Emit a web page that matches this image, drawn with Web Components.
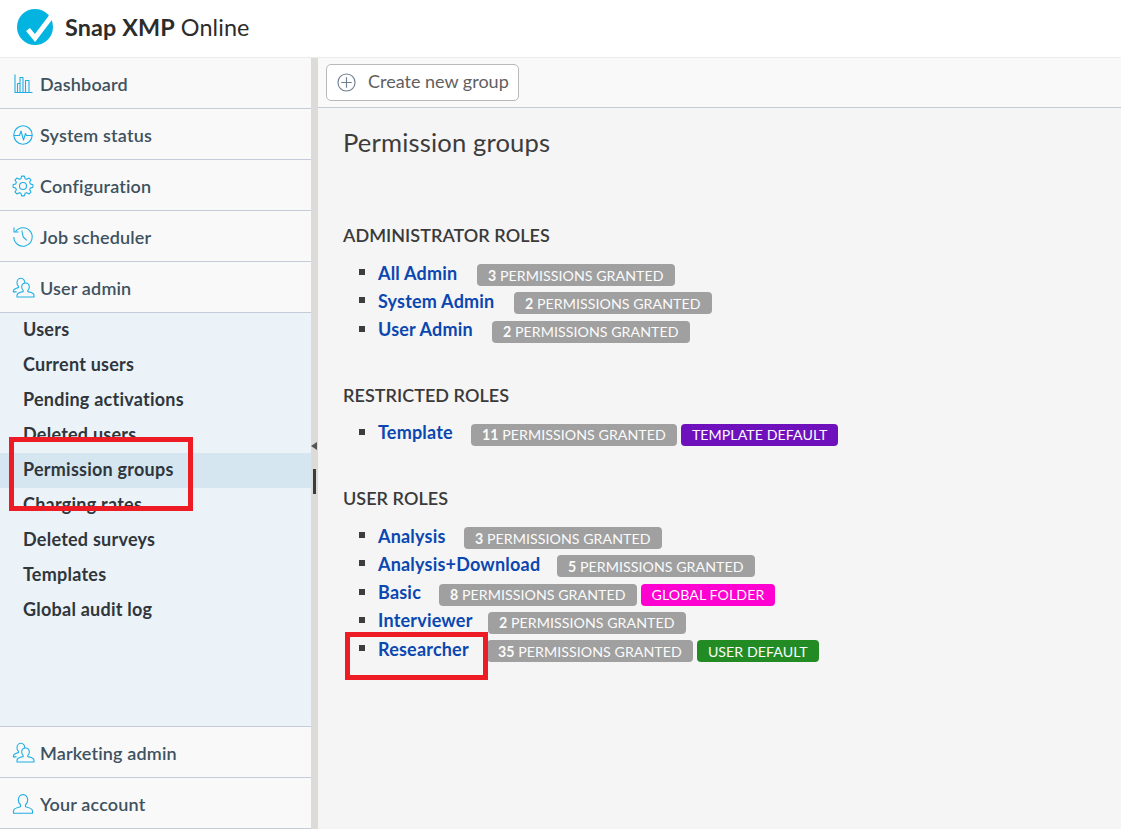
<!DOCTYPE html>
<html lang="en"><head><meta charset="utf-8"><title>Permission groups</title>
<style>
html,body{margin:0;height:100%}
body{font-family:Lato,"Open Sans",sans-serif;overflow:hidden}
</style></head>
<body>
<x-app>
  <x-top slot="top"></x-top>
  <x-side slot="side">
    <x-nav icon="chart">Dashboard</x-nav>
    <x-nav icon="pulse">System status</x-nav>
    <x-nav icon="gear">Configuration</x-nav>
    <x-nav icon="history">Job scheduler</x-nav>
    <x-nav icon="users">User admin</x-nav>
    <x-subnav>
      <x-subitem>Users</x-subitem>
      <x-subitem>Current users</x-subitem>
      <x-subitem>Pending activations</x-subitem>
      <x-subitem>Deleted users</x-subitem>
      <x-subitem active>Permission groups</x-subitem>
      <x-subitem>Charging rates</x-subitem>
      <x-subitem>Deleted surveys</x-subitem>
      <x-subitem>Templates</x-subitem>
      <x-subitem>Global audit log</x-subitem>
    </x-subnav>
    <x-nav icon="users">Marketing admin</x-nav>
    <x-nav icon="user">Your account</x-nav>
  </x-side>
  <x-splitter slot="split"></x-splitter>
  <x-toolbar slot="toolbar"><x-button>Create new group</x-button></x-toolbar>
  <x-content slot="content">
    <x-title>Permission groups</x-title>
    <x-section heading="ADMINISTRATOR ROLES" top="67">
      <x-role name="All Admin" w="99"><x-badge><b>3</b> PERMISSIONS GRANTED</x-badge></x-role>
      <x-role name="System Admin" w="136"><x-badge><b>2</b> PERMISSIONS GRANTED</x-badge></x-role>
      <x-role name="User Admin" w="114"><x-badge><b>2</b> PERMISSIONS GRANTED</x-badge></x-role>
    </x-section>
    <x-section heading="RESTRICTED ROLES" top="38">
      <x-role name="Template" w="93"><x-badge><b>11</b> PERMISSIONS GRANTED</x-badge><x-badge color="#6f10bd">TEMPLATE DEFAULT</x-badge></x-role>
    </x-section>
    <x-section heading="USER ROLES" top="38">
      <x-role name="Analysis" w="86"><x-badge><b>3</b> PERMISSIONS GRANTED</x-badge></x-role>
      <x-role name="Analysis+Download" w="179"><x-badge><b>5</b> PERMISSIONS GRANTED</x-badge></x-role>
      <x-role name="Basic" w="61"><x-badge><b>8</b> PERMISSIONS GRANTED</x-badge><x-badge color="#ff00d0">GLOBAL FOLDER</x-badge></x-role>
      <x-role name="Interviewer" w="110"><x-badge><b>2</b> PERMISSIONS GRANTED</x-badge></x-role>
      <x-role name="Researcher" w="109"><x-badge><b>35</b> PERMISSIONS GRANTED</x-badge><x-badge color="#238b23">USER DEFAULT</x-badge></x-role>
    </x-section>
  </x-content>
  <x-callout slot="over" style="left:9px;top:437px;width:184px;height:74px"></x-callout>
  <x-callout slot="over" style="left:345px;top:632px;width:143px;height:48px"></x-callout>
</x-app>
<script>
function gearPath(){
  let d='';const cx=10,cy=10,R=10,r=7.6,n=8;
  for(let i=0;i<n;i++){
    const a=i*2*Math.PI/n-Math.PI/2,s=2*Math.PI/n;
    const pts=[[r,a-s*.36],[R,a-s*.17],[R,a+s*.17],[r,a+s*.36]];
    for(const[p,t]of pts){d+=(d?'L':'M')+(cx+p*Math.cos(t)).toFixed(2)+' '+(cy+p*Math.sin(t)).toFixed(2);}
  }
  return '<circle cx="10" cy="10" r="3.500"/><path d="'+d+'z"/>';
}
const ICONS={
chart:'<path d="M2 0.500V18.500H19.500M4.500 18.500V9.500h2.500V18.500M7 9.500V3.500h3V18.500M12.500 18.500V6.500h3.500V18.500"/>',
pulse:'<circle cx="10" cy="10" r="9.200"/><path d="M.8 10.500H6.500L8 6l2.500 9 2-6.500 1 2h5.700"/>',
gear:gearPath(),
history:'<path d="M2.400 4.800A9.200 9.200 0 1 1 .8 10"/><path d="M1 .6v4.400h4.500"/><path d="M8.800 3.500l1.400 6.500 3.600 3.300"/>',
users:'<path d="M12.500 5c-2.300 0-3.800 1.800-3.800 4 0 1.500.6 2.700 1.500 3.400v1.200c-3 .6-6.200 1.700-6.200 3.600v1.800h17v-1.800c0-1.900-3.200-3-6.200-3.600v-1.200c.9-.7 1.500-1.900 1.500-3.400 0-2.200-1.500-4-3.800-4z"/><path d="M11.800 5C11.800 2.200 10.300.3 8 .3 5.700.3 4 2.200 4 4.700c0 1.500.6 2.800 1.500 3.600v1.300C3 10.200.4 11.300.4 13v.9h3.200"/>',
user:'<path d="M10 .6C7.200.6 5.300 3 5.300 6c0 2 .8 3.700 2.200 4.800v2C3.700 13.600.5 15 .5 17v2.200h19V17c0-2-3.200-3.400-7-4.200v-2c1.400-1.100 2.200-2.800 2.200-4.800C14.700 3 12.800.6 10 .6z"/>'
};
function def(name,css,html,init){
  customElements.define(name,class extends HTMLElement{
    constructor(){super();const r=this.attachShadow({mode:'open'});r.innerHTML='<style>'+css+'</style>'+html;}
    connectedCallback(){if(init)init(this,this.shadowRoot);}
  });
}
def('x-app',`:host{display:grid;grid-template-columns:311px 7px 1fr;grid-template-rows:58px 50px 1fr;height:829px;position:relative;background:#f5f5f5}
  ::slotted([slot=top]){grid-column:1/-1}
  ::slotted([slot=side]){grid-row:2/4}
  ::slotted([slot=split]){grid-row:2/4}`,
  '<slot name="top"></slot><slot name="side"></slot><slot name="split"></slot><slot name="toolbar"></slot><slot name="content"></slot><slot name="over"></slot>');
def('x-top',`:host{display:flex;align-items:center;background:#fff;border-bottom:1px solid #ebebeb;box-sizing:border-box;padding-left:17px;gap:12px;font-size:23.400px;color:#2c2c2c}
  b{font-weight:700}svg{display:block;margin-top:-3px}div{margin-top:-4px;letter-spacing:.1px}`,
  `<svg width="36" height="36" viewBox="0 0 36 36"><circle cx="18" cy="18" r="18" fill="#04b4e0"/><path d="M11 20.500l7 8.500L37 4" fill="none" stroke="#fff" stroke-width="5"/></svg><div><b>Snap XMP</b> Online</div>`);
def('x-side',`:host{display:flex;flex-direction:column;background:#f9f9f9;min-height:0}`,'<slot></slot>');
def('x-nav',`:host{display:flex;align-items:center;height:51px;box-sizing:border-box;border-bottom:1px solid #c5cbd9;padding:2px 0 0 13px;gap:7px;font-size:18px;font-weight:600;color:#3e5260;letter-spacing:.16px}
  svg{width:20px;height:20px;fill:none;stroke:#1fafe6;stroke-width:1.100;stroke-linejoin:round;flex:none;overflow:visible}`,
  '<svg viewBox="0 0 20 20"></svg><span><slot></slot></span>',
  (h,r)=>{r.querySelector('svg').innerHTML=ICONS[h.getAttribute('icon')];});
def('x-subnav',`:host{display:block;flex:1;background:#ebf3f8;border-bottom:1px solid #c5cbd9}`,'<slot></slot>');
def('x-subitem',`:host{display:flex;align-items:center;height:35px;box-sizing:border-box;padding:0 0 3px 23px;font-size:18px;font-weight:700;color:#30363c;letter-spacing:.24px}
  :host([active]){background:#d5e6f1}`,'<slot></slot>');
def('x-splitter',`:host{display:block;background:#dcdbd8;position:relative}
  i{position:absolute;left:0;top:384px;border:4px solid transparent;border-right:6px solid #555;border-left:0}
  u{position:absolute;left:2px;top:411px;width:3px;height:25px;background:#3c3c3c}`,'<i></i><u></u>');
def('x-toolbar',`:host{display:flex;align-items:center;background:#f9f9f9;border-bottom:1px solid #c5cbd9;padding-left:8px;box-sizing:border-box}`,'<slot></slot>');
def('x-button',`:host{display:flex;align-items:center;height:37px;width:193px;box-sizing:border-box;background:#fff;border:1px solid #b9b9b9;border-radius:5px;padding:0 0 2px 10px;gap:12px;font-size:18px;color:#5f5f5f;margin-top:-1px}
  svg{width:19px;height:19px;fill:none;stroke:#6d7f90;stroke-width:1.200;flex:none;margin-top:2px}`,
  '<svg viewBox="0 0 20 20"><circle cx="10" cy="10" r="9"/><path d="M10 4.500v11M4.500 10h11"/></svg><span><slot></slot></span>');
def('x-content',`:host{display:block;padding:0 25px}`,'<slot></slot>');
def('x-title',`:host{display:block;font-size:25.600px;line-height:30px;padding-top:19px;color:#3c3c3c;letter-spacing:.15px}`,'<slot></slot>');
def('x-section',`:host{display:block}
  h2{margin:0 0 15px;font-size:18px;line-height:22px;font-weight:600;color:#3a3a3a;letter-spacing:.04px}
  ul{margin:0;padding:0;list-style:none}`,
  '<h2></h2><ul><slot></slot></ul>',
  (h,r)=>{r.querySelector('h2').textContent=h.getAttribute('heading');h.style.marginTop=h.getAttribute('top')+'px';});
def('x-role',`:host{display:flex;align-items:center;height:28.250px;padding-left:16px;gap:4px}
  i{flex:none;width:6px;height:6px;background:#3d3d3d;margin-right:9px;margin-top:-6px}
  a{flex:none;margin-right:-4px;font-size:18px;font-weight:700;color:#0b47b0;letter-spacing:.2px;margin-top:-5px;text-decoration:none}`,
  '<i></i><a></a><slot></slot>',
  (h,r)=>{const a=r.querySelector('a');a.textContent=h.getAttribute('name');a.style.width=h.getAttribute('w')+'px';});
def('x-badge',`:host{display:inline-flex;align-items:center;height:22px;box-sizing:border-box;padding:0 11px;border-radius:4px;background:var(--c,#a0a0a0);color:#fbfbfb;font-size:14.200px;white-space:pre;letter-spacing:.05px}
  ::slotted(b){font-weight:700}`,'<slot></slot>',
  (h)=>{const c=h.getAttribute('color');if(c)h.style.setProperty('--c',c);});
def('x-callout',`:host{display:block;position:absolute;box-sizing:border-box;border:5px solid #ed1c24}`,'');
</script>
</body></html>
